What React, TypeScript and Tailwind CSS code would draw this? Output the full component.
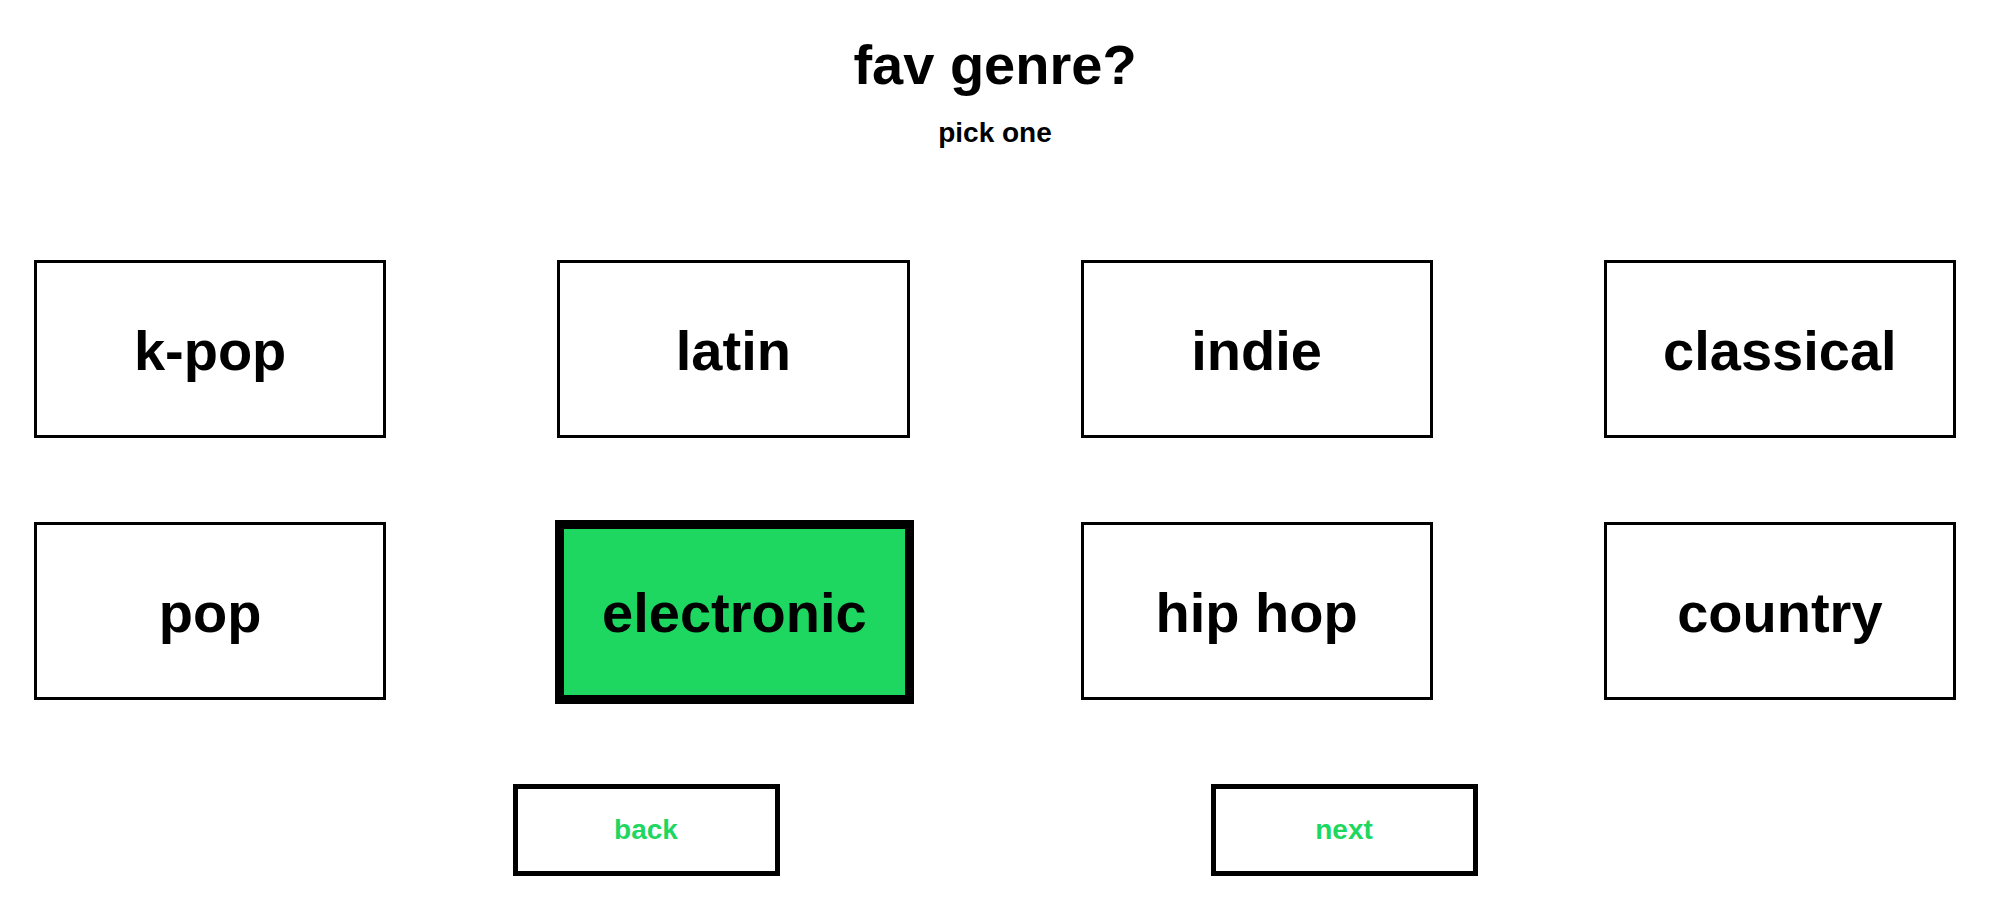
import { useState } from "react";

const genres = [
  "k-pop",
  "latin",
  "indie",
  "classical",
  "pop",
  "electronic",
  "hip hop",
  "country",
];

function GenreButton({
  name,
  selected,
  onSelect,
}: {
  name: string;
  selected: boolean;
  onSelect: () => void;
}) {
  return (
    <button
      type="button"
      aria-pressed={selected}
      onClick={onSelect}
      className={
        selected
          ? "-mt-0.5 -mr-1 -mb-1 -ml-0.5 cursor-pointer border-9 border-black bg-[#1ed760] pt-0.5 text-[56px] leading-[64px] font-bold"
          : "cursor-pointer border-3 border-black bg-white pt-1 text-[56px] leading-[64px] font-bold"
      }
    >
      {name}
    </button>
  );
}

function NavButton({ label }: { label: string }) {
  return (
    <button
      type="button"
      className="h-[92px] w-[267px] cursor-pointer border-5 border-black bg-white text-[28px] leading-8 font-bold text-[#1ed760]"
    >
      {label}
    </button>
  );
}

export default function App() {
  const [genre, setGenre] = useState("electronic");

  return (
    <main className="min-h-screen bg-white pt-[37px] pr-[43px] pb-9 pl-[34px] font-['Liberation_Sans',Arial,sans-serif] text-black">
      <header className="text-center font-bold">
        <h1 className="text-[56px] leading-[56px]">fav genre?</h1>
        <p className="mt-6 text-[28px] leading-8">pick one</p>
      </header>
      <div className="mt-[111px] grid auto-rows-[178px] grid-cols-4 gap-x-[171px] gap-y-[84px]">
        {genres.map((name) => (
          <GenreButton
            key={name}
            name={name}
            selected={name === genre}
            onSelect={() => setGenre(name)}
          />
        ))}
      </div>
      <nav className="mt-[84px] flex justify-center gap-[431px]">
        <NavButton label="back" />
        <NavButton label="next" />
      </nav>
    </main>
  );
}
